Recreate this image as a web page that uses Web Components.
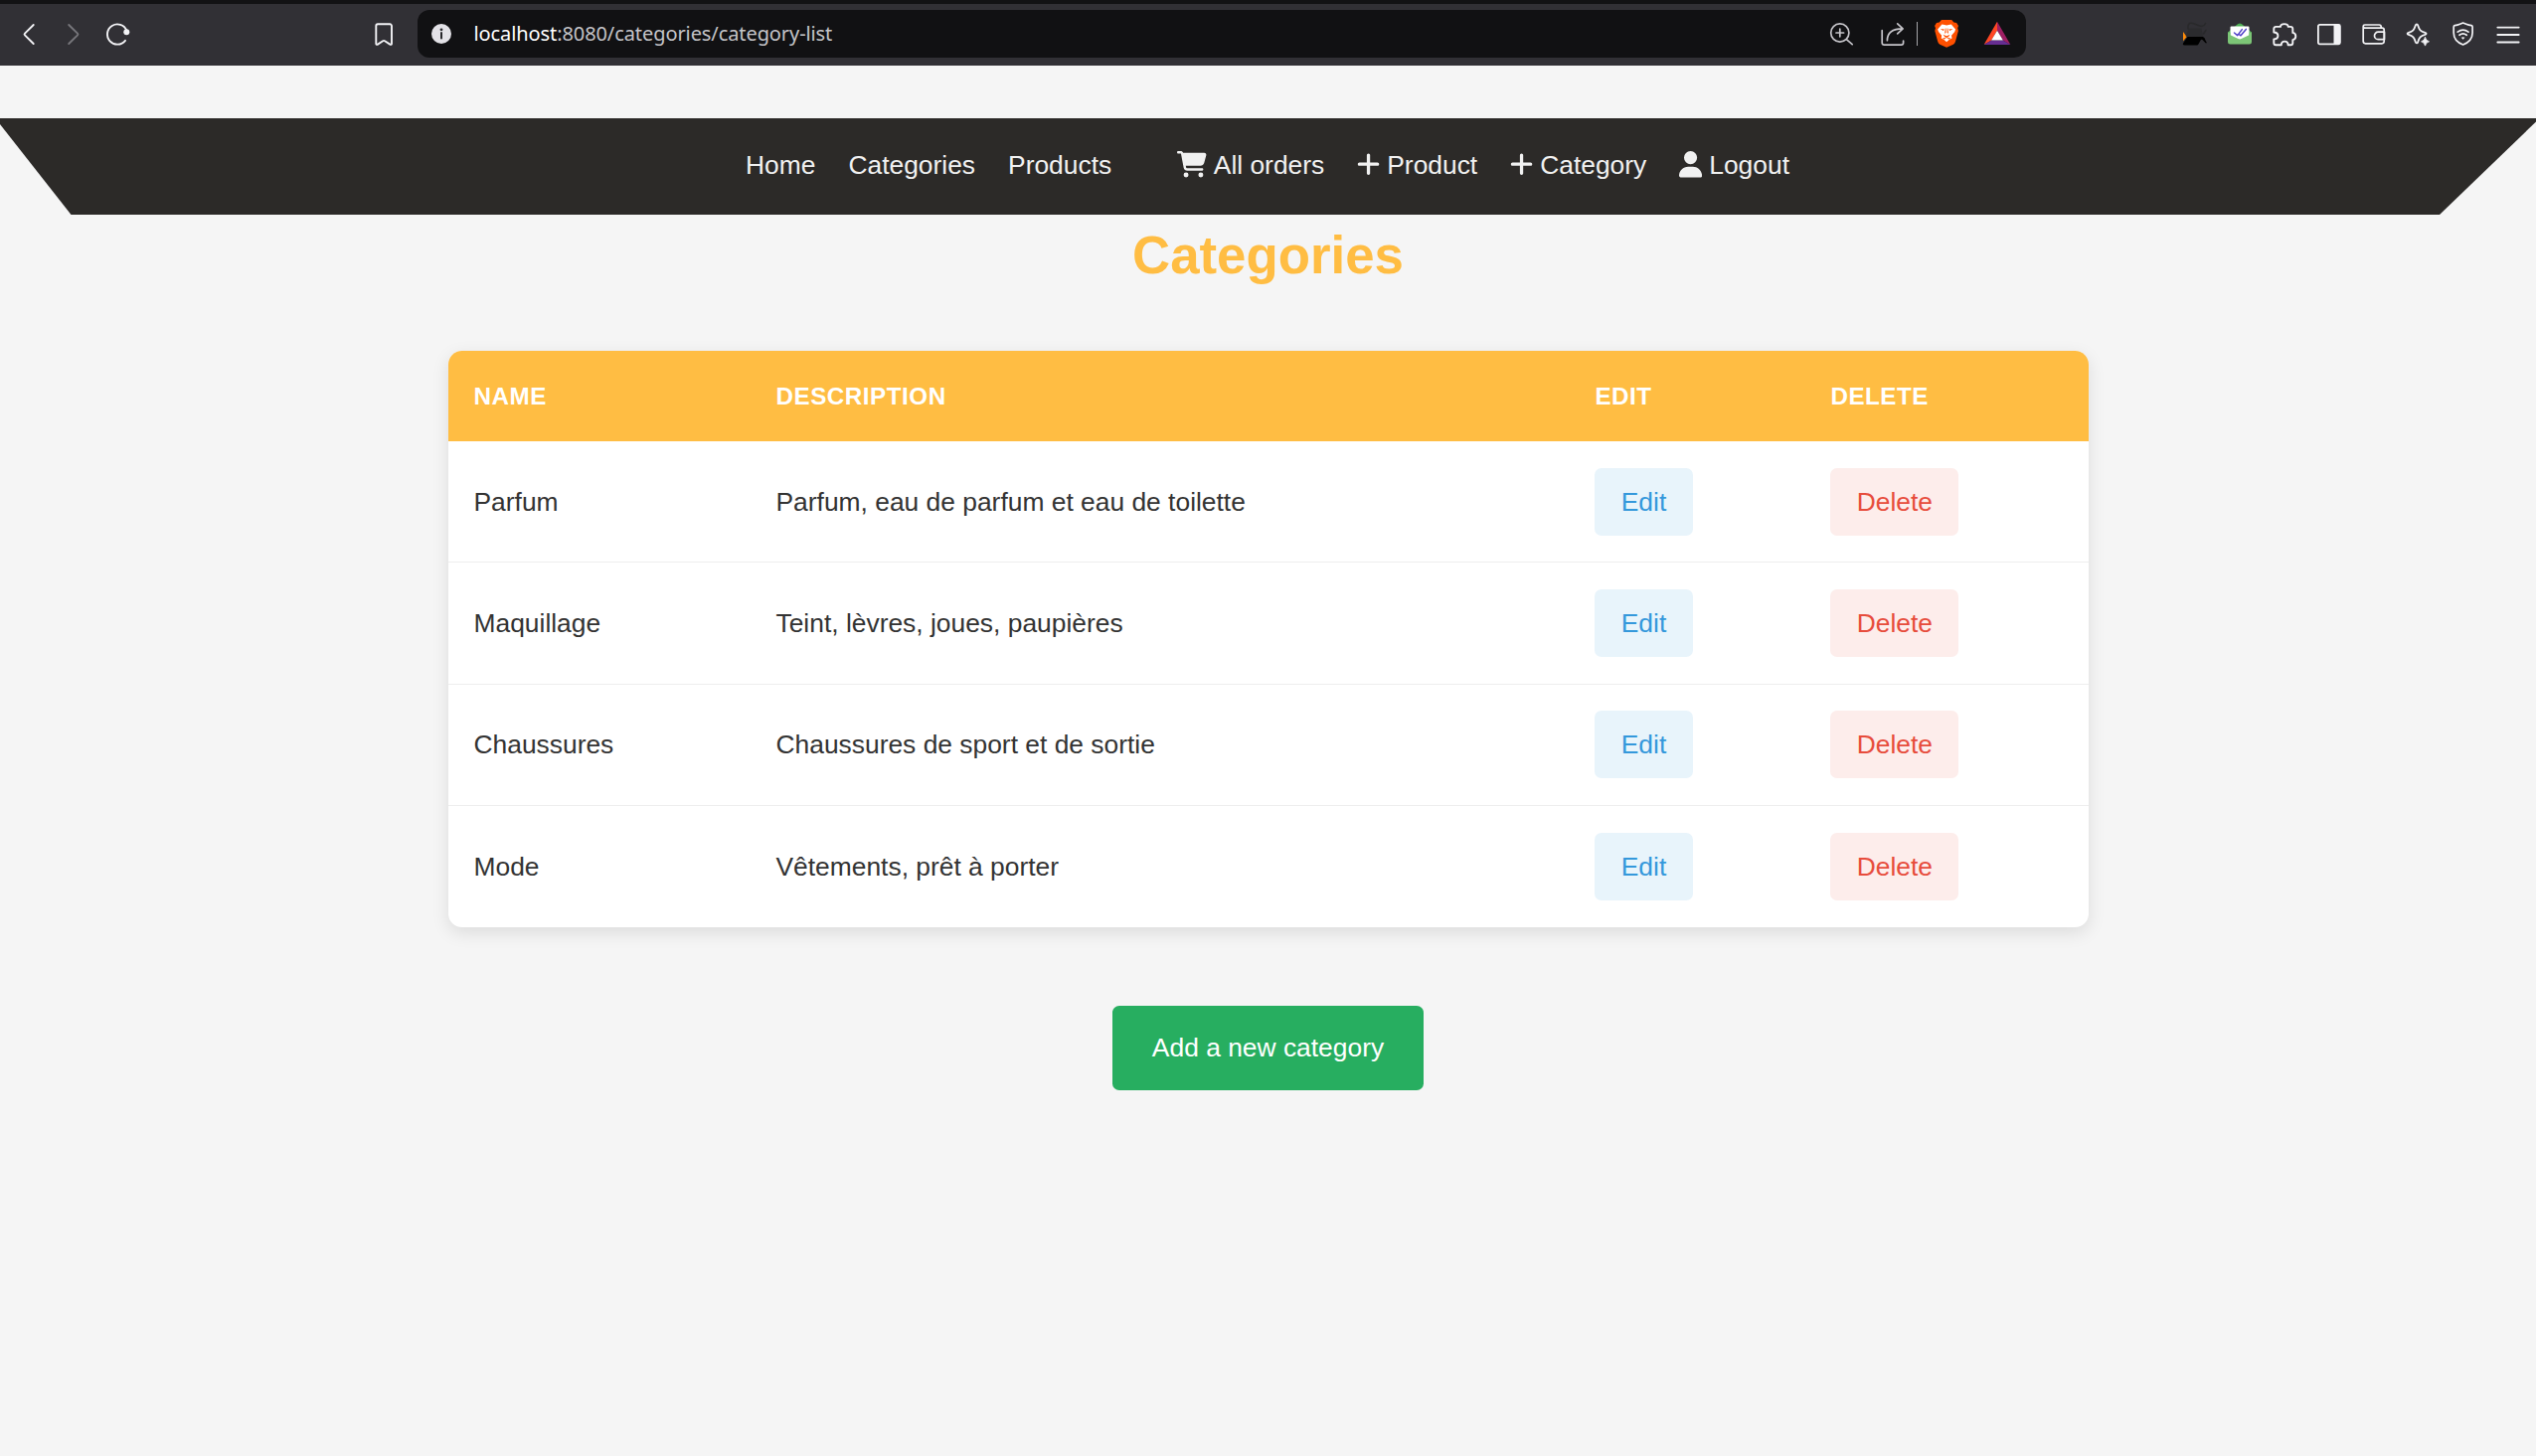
<!DOCTYPE html>
<html lang="en">
<head>
<meta charset="utf-8">
<title>Categories</title>
<style>
  html, body { margin: 0; height: 100%; }
  body { background: #f5f5f5; color: #333; font-family: "Liberation Sans", Arial, sans-serif; font-size: 26.4px; line-height: 30px; overflow: hidden; }
</style>
</head>
<body>
<browser-bar></browser-bar>
<site-nav>
  <nav-link>Home</nav-link>
  <nav-link>Categories</nav-link>
  <nav-link>Products</nav-link>
  <nav-link></nav-link>
  <nav-link icon="cart">All orders</nav-link>
  <nav-link icon="plus">Product</nav-link>
  <nav-link icon="plus">Category</nav-link>
  <nav-link icon="user">Logout</nav-link>
</site-nav>
<page-title>Categories</page-title>
<category-table>
  <category-row><span slot="name">Parfum</span><span slot="description">Parfum, eau de parfum et eau de toilette</span></category-row>
  <category-row><span slot="name">Maquillage</span><span slot="description">Teint, lèvres, joues, paupières</span></category-row>
  <category-row><span slot="name">Chaussures</span><span slot="description">Chaussures de sport et de sortie</span></category-row>
  <category-row><span slot="name">Mode</span><span slot="description">Vêtements, prêt à porter</span></category-row>
</category-table>
<add-button>Add a new category</add-button>

<script>
const define = (name, html) => customElements.define(name, class extends HTMLElement {
  constructor() {
    super();
    this.attachShadow({ mode: 'open' }).innerHTML = html;
  }
});

const TOOL_ICONS = {
  back: '<path d="M18.7 5L10 13.6q-.9.9 0 1.8L18.7 24" stroke-width="1.9"/>',
  forward: '<path d="M9.2 5L18 13.6q.9.9 0 1.8L9.2 24" stroke="#77767b" stroke-width="1.9"/>',
  reload: '<path d="M22.4 10.7A10.1 10.1 0 1 0 21 20.8" stroke-width="1.9"/><circle cx="22.3" cy="12.3" r="3" fill="#f2f2f5" stroke="none"/>',
  bookmark: '<path d="M8 4.3H20.2a1.8 1.8 0 0 1 1.8 1.8V23.8a1 1 0 0 1-1.7.8L15.1 21.2q-1-.6-2 0L8 24.6a1 1 0 0 1-1.7-.8V6.1A1.8 1.8 0 0 1 8 4.3z" stroke-width="1.9"/>',
  info: '<circle cx="14" cy="14" r="10" fill="#e3e2e7" stroke="none"/><circle cx="14" cy="9.8" r="1.4" fill="#26262a" stroke="none"/><path d="M14 13v5.6" stroke="#26262a" stroke-width="2"/>',
  zoom: '<g stroke="#c5c4c9" stroke-width="1.7"><circle cx="12.8" cy="13" r="9.1"/><path d="M19.4 19.6L25.2 24.6M9 13h7.6M12.8 9.2v7.6"/></g>',
  share: '<g stroke="#c5c4c9" stroke-width="1.7"><path d="M3.2 10.7v12.2a2.2 2.2 0 0 0 2.2 2.2h17a2.2 2.2 0 0 0 2.2-2.2v-1.8M8.4 20.7C8.4 13.6 13.6 9 24 8.9M18.7 3.9l5.4 5-5.4 5"/></g>',
  brave: '<g stroke="none"><path fill="#ff5000" d="M9 0h10.2l2.2 2.6 2.7.3 1.9 3.2-.8 2.2.7 2.7-2.9 10.7q-.5 1.8-2.2 3L14.1 27.7 7.4 24.7q-1.7-1.2-2.2-3L2.3 11 3 8.3l-.9-2.2L4 2.9l2.7-.3z"/><path fill="#fff" d="M9.4 4.6l2.7.5 2 .5 2-.5 2.7-.5 4.3 4.9-.9 2.6-3.2 3.6.5 2.7-2.6 1.3-2.8 2.5-2.8-2.5-2.6-1.3.5-2.7L6 12.1l-.9-2.6z"/><path fill="#ff5000" d="M7.7 8.9l4.3.7-1.2 1.5zM20.5 8.9l-4.3.7 1.2 1.5zM12.8 8.5h.7v4.4l-1.3.8zM15.4 8.5h-.7v4.4l1.3.8zM10.6 14.7l3.5 1.5 3.5-1.5-1.7 2.5-1.8.9-1.8-.9zM9.9 18.4l2.3-.3 1.9 1 1.9-1 2.3.3-1.6 1-2.6-.8-2.6.8z"/></g>',
  bat: '<g stroke="none"><path fill="#ff4724" d="M14 1.7L.6 25 8.2 20.6 14 10.8z"/><path fill="#9e1f63" d="M14 1.7L27.4 25l-7.6-4.4L14 10.8z"/><path fill="#662d91" d="M.6 25h26.8l-7.6-4.6H8.2z"/><path fill="#fff" d="M14 10.8l5.9 9.6H8.1z"/></g>',
  cat: '<g stroke="none"><path fill="#ff8c0a" d="M2 12l3.7 5-3.7 4.2z"/><path fill="#2b2b2e" d="M4.5 16.5L8 8.5h12.5L22 17z"/><path d="M7 9C6 1 12 3 16 5s7 2 8.5-1.5M22.5 14l2.4-3.5" stroke="#29292b" stroke-width="1.6"/><path fill="#000" d="M6.5 17H22q2 .5 2.5 3.5L26 23.3h-1.5L21.5 20q-.8-.7-1.6 0l-2.5 4.5q-.5 1-1.4 1H3.5q-2.5 0-1.2-2.5z"/></g>',
  mail: '<g stroke="none"><path fill="#4fae55" d="M2 12.5L12.2 4q1.8-1.2 3.6 0L26 12.5l-1 6H3z"/><path fill="#fff" d="M5.5 6.6h17q1 0 1 1v10l-9.5 5-9.5-5v-10q0-1 1-1z"/><path fill="#7cc576" d="M2 12.4l2.5.3v2.5L12.5 19q1.5.8 3 0l8-3.8v-2.5l2.5-.3v9.8q0 2.4-2.4 2.4H4.4Q2 24.6 2 22.2z"/></g><path d="M8.5 13l3.2 2.6 4.6-6M13.2 14.5l1.8 1.3 5.3-6.4" stroke="#5140c9" stroke-width="1.5"/>',
  puzzle: '<path d="M5.3 6.9H10C10 3.2 17.7 3.2 17.7 6.9H20.3A2 2 0 0 1 22.3 8.9V12.9C26.3 13.6 26.3 19.4 22.3 20.1V23.3A2 2 0 0 1 20.3 25.3H17.6C17.6 20.4 10.8 20.4 10.8 25.3H5.3A2 2 0 0 1 3.3 23.3V19.5C8.8 18.9 8.8 12.8 3.3 12.5V8.9A2 2 0 0 1 5.3 6.9z" stroke-width="1.9"/>',
  panel: '<rect x="2.9" y="4.9" width="22" height="19.4" rx="1.5" stroke-width="1.8"/><path d="M18.5 5h5.5q1 0 1 1v17.4q0 1-1 1h-5.5z" fill="#f2f2f5" stroke="none"/>',
  wallet: '<g stroke-width="1.7"><path d="M3.2 7V21.6a2.2 2.2 0 0 0 2.2 2.2H22a2.2 2.2 0 0 0 2.2-2.2V10.2a2 2 0 0 0-2-2H4.8a1.5 1.5 0 0 1 0-3.2H19.3q2 0 2 2.5"/><path d="M24.5 12.2H18.2a3.7 3.7 0 0 0 0 7.4h6.3z"/></g>',
  sparkle: '<path d="M12 4.4c.7 0 1 .5 1.2 1.2 1.3 4.3 2.5 5.8 7.2 7.2 1.6.5 1.6 1.6 0 2.1-4.7 1.3-5.9 2.9-7.2 7.3-.5 1.6-1.9 1.6-2.4 0-1.3-4.4-2.5-6-7-7.3-1.6-.5-1.6-1.6 0-2.1 4.5-1.4 5.7-2.9 7-7.2.2-.7.5-1.2 1.2-1.2z" stroke-width="1.8"/><path d="M20.500 17.500q.7 3.500 4 4.300-3.300.8-4 4.300-.7-3.500-4-4.300 3.300-.8 4-4.300z" fill="#f2f2f5" stroke-width=".8"/>',
  shield: '<g stroke-width="1.7"><path d="M13.6 3l3.2 1.3q2.5 1 5.3 1.4 1 .2 1 1.200v6c0 5.500-4 9.800-9.500 12.100C8 22.700 4.200 18.400 4.200 12.900v-6q0-1 1-1.200 2.800-.4 5.300-1.400z"/><path d="M8.200 12.200q5.400-4.200 10.800 0M10 15.300q3.600-2.700 7.200 0"/></g><path d="M11.700 17.800q1.900-1.200 3.800 0l-1.900 1.900z" fill="#f2f2f5" stroke="none"/>',
  menu: '<path d="M3.300 7.600h21.400M3.300 15h21.400M3.300 22.500h21.400" stroke-width="1.800"/>'
};

customElements.define('tool-icon', class extends HTMLElement {
  constructor() {
    super();
    this.attachShadow({ mode: 'open' });
  }
  connectedCallback() {
    this.shadowRoot.innerHTML = `
      <style>:host{display:block;width:28px;height:28px;flex:none}svg{display:block;overflow:visible}</style>
      <svg width="28" height="28" viewBox="0 0 28 28" fill="none" stroke="#f2f2f5" stroke-linecap="round" stroke-linejoin="round">${TOOL_ICONS[this.getAttribute('name')]}</svg>`;
  }
});

define('browser-bar', `
  <style>
    :host { display: flex; align-items: center; box-sizing: border-box; height: 66px; padding: 0 14px 2px 14.5px; border-top: 4px solid #121214; background: #313035; }
    .nav, .tools { display: flex; gap: 17px; }
    .mark { margin-left: 239px; }
    .address { display: flex; align-items: center; box-sizing: border-box; width: 1618px; height: 48px; margin-left: 20.5px; padding: 0 15px 0 10px; border-radius: 12px; background: #111113; }
    .url { margin-left: 18.5px; flex: 1; font: 20px/28px "Noto Sans", sans-serif; letter-spacing: -.09px; color: #c4c4c8; white-space: nowrap; }
    .url b { font-weight: 400; color: #fff; }
    .share { margin-left: 23.5px; }
    .rule { width: 1px; height: 24px; margin-left: 10.5px; background: #a5a4a9; }
    .brave { margin-left: 15px; }
    .bat { margin-left: 23px; }
    .tools { margin-left: auto; }
  </style>
  <div class="nav"><tool-icon name="back"></tool-icon><tool-icon name="forward"></tool-icon><tool-icon name="reload"></tool-icon></div>
  <tool-icon class="mark" name="bookmark"></tool-icon>
  <div class="address">
    <tool-icon name="info"></tool-icon>
    <div class="url"><b>localhost</b>:8080/categories/category-list</div>
    <tool-icon name="zoom"></tool-icon>
    <tool-icon class="share" name="share"></tool-icon>
    <div class="rule"></div>
    <tool-icon class="brave" name="brave"></tool-icon>
    <tool-icon class="bat" name="bat"></tool-icon>
  </div>
  <div class="tools">
    <tool-icon name="cat"></tool-icon><tool-icon name="mail"></tool-icon><tool-icon name="puzzle"></tool-icon><tool-icon name="panel"></tool-icon>
    <tool-icon name="wallet"></tool-icon><tool-icon name="sparkle"></tool-icon><tool-icon name="shield"></tool-icon><tool-icon name="menu"></tool-icon>
  </div>`);

define('site-nav', `
  <style>
    :host { display: flex; justify-content: center; gap: 33px; box-sizing: border-box; height: 97px; margin-top: 53px; padding: 32px 1px 0 0; background: #2c2a28;
      clip-path: polygon(0 0, 100% 0, 100% 3.5px, calc(100% - 97px) 100%, 71.5px 100%, 0 6px); }
  </style>
  <slot></slot>`);

const NAV_ICONS = {
  cart: [576, 'M0 24C0 10.7 10.7 0 24 0H69.5c22 0 41.5 12.8 50.6 32h411c26.3 0 45.5 25 38.6 50.4l-41 152.3c-8.5 31.4-37 53.3-69.5 53.3H170.7l5.4 28.5c2.2 11.3 12.1 19.5 23.6 19.5H488c13.3 0 24 10.7 24 24s-10.7 24-24 24H199.7c-34.6 0-64.3-24.6-70.7-58.5L77.4 54.5c-.7-3.8-4-6.5-7.9-6.5H24C10.7 48 0 37.3 0 24zM128 464a48 48 0 1 1 96 0 48 48 0 1 1-96 0zm336-48a48 48 0 1 1 0 96 48 48 0 1 1 0-96z'],
  plus: [448, 'M256 80c0-17.7-14.3-32-32-32s-32 14.3-32 32V224H48c-17.7 0-32 14.3-32 32s14.3 32 32 32H192V432c0 17.7 14.3 32 32 32s32-14.3 32-32V288H400c17.7 0 32-14.3 32-32s-14.3-32-32-32H256V80z'],
  user: [448, 'M224 256A128 128 0 1 0 224 0a128 128 0 1 0 0 256zm-45.7 48C79.8 304 0 383.8 0 482.3C0 498.7 13.3 512 29.7 512H418.3c16.4 0 29.7-13.3 29.7-29.7C448 383.8 368.2 304 269.7 304H178.3z']
};

customElements.define('nav-link', class extends HTMLElement {
  constructor() {
    super();
    this.attachShadow({ mode: 'open' });
  }
  connectedCallback() {
    const icon = NAV_ICONS[this.getAttribute('icon')];
    const svg = icon ? `<svg width="${icon[0] / 512 * 26.4}" height="26.4" viewBox="0 0 ${icon[0]} 512" fill="#f1f1f1"><path d="${icon[1]}"/></svg>` : '';
    this.shadowRoot.innerHTML = `
      <style>:host{display:flex;align-items:flex-start;height:30px;color:#f1f1f1;white-space:nowrap}svg{display:block;margin:1.2px 6.9px 0 0}</style>
      ${svg}<slot></slot>`;
  }
});

define('page-title', `
  <style>
    :host { display: block; margin-top: 11px; text-align: center; }
    h1 { margin: 0; font-size: 52.8px; line-height: 60px; font-weight: 700; color: #ffbd43; }
  </style>
  <h1><slot></slot></h1>`);

define('category-table', `
  <style>
    :host { display: block; width: 1650px; margin: 66px auto 0; border-radius: 13.75px; overflow: hidden; background: #fff; box-shadow: 0 5.5px 16.5px rgba(0,0,0,.1);
      --columns: 303.6px 823.9px 237px 1fr; }
    .head { display: grid; grid-template-columns: var(--columns); align-items: center; height: 91px; background: #ffbd43; color: #fff; font-size: 24.2px; font-weight: 700; letter-spacing: .54px; }
    .head div { padding-left: 26.4px; }
    .head div:first-child { padding-left: 26px; }
  </style>
  <div class="head"><div>NAME</div><div>DESCRIPTION</div><div>EDIT</div><div>DELETE</div></div>
  <slot></slot>`);

define('category-row', `
  <style>
    :host { display: grid; grid-template-columns: var(--columns); align-items: center; box-sizing: border-box; height: 122.25px; border-bottom: 1px solid #eee; }
    :host(:last-of-type) { border-bottom: 0; }
    .cell { padding-left: 26.4px; }
    .cell:first-of-type { padding-left: 26px; }
  </style>
  <div class="cell"><slot name="name"></slot></div>
  <div class="cell"><slot name="description"></slot></div>
  <div class="cell"><row-action style="--tint:#e8f4fb;--ink:#3498db">Edit</row-action></div>
  <div class="cell"><row-action style="--tint:#fdedeb;--ink:#e74c3c">Delete</row-action></div>`);

define('row-action', `
  <style>:host { display: block; width: fit-content; padding: 19px 26.4px; border-radius: 6.875px; background: var(--tint); color: var(--ink); }</style>
  <slot></slot>`);

define('add-button', `
  <style>:host { display: block; width: fit-content; margin: 79px auto 0; padding: 27px 39.6px 28px; border-radius: 6.875px; background: #27ae60; color: #fff; }</style>
  <slot></slot>`);
</script>
</body>
</html>
